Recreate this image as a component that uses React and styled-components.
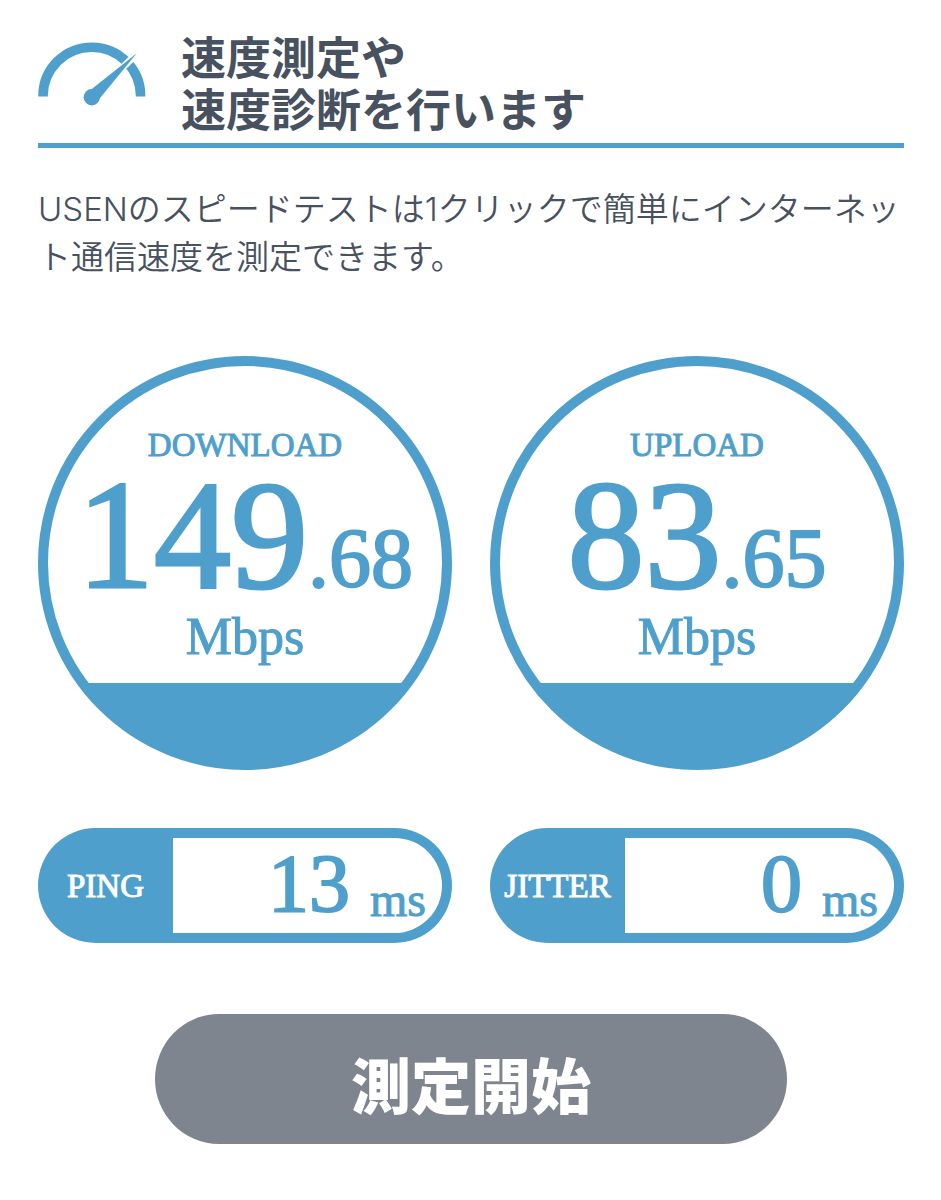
import styled, { createGlobalStyle } from "styled-components"

const GlobalStyle = createGlobalStyle`
  body {
    margin: 0;
    background-color: #fff;
    color: #47515f;
    font-family: "Noto Sans CJK JP", sans-serif;
  }
`

const PageStyled = styled.main`
  padding: 30px 37px 56px 38px;
`

const HeaderStyled = styled.header`
  display: flex;
  align-items: flex-start;
  gap: 35px;
  padding-bottom: 9px;
  border-bottom: 5px solid #4f9fcd;

  svg {
    display: block;
    flex: none;
    margin-top: 12px;
  }

  h1 {
    margin: 0;
    font-size: 45px;
    font-weight: bold;
    line-height: 52px;
  }
`

const LeadStyled = styled.p`
  margin: 37px -4px 0 0;
  font-family: Inter, "Noto Sans CJK JP", sans-serif;
  font-size: 33px;
  font-weight: 350;
  line-height: 48px;
  word-break: break-all;
`

const ResultGrid = styled.section`
  display: grid;
  grid-template-columns: 1fr 1fr;
  gap: 58px 38px;
  margin-top: 75px;
  color: #4f9fcd;
  font-family: "Liberation Serif", serif;
`

const CircleStyled = styled.div`
  box-sizing: border-box;
  display: flex;
  flex-direction: column;
  align-items: center;
  aspect-ratio: 1;
  padding-top: 59px;
  border: 10px solid #4f9fcd;
  border-radius: 50%;
  background: linear-gradient(to top, #4f9fcd 21%, #fff 21%) border-box;
`

const Label = styled.span`
  font-size: 33px;
  line-height: 40px;
  -webkit-text-stroke: 1px;
`

const SpeedValue = styled.div`
  margin: 10px 0 12px;
  font-size: 154px;
  line-height: 120px;
  white-space: nowrap;
  -webkit-text-stroke: 3px;

  small {
    font-size: 84px;
    line-height: 0;
    -webkit-text-stroke: 2px;
  }
`

const SpeedUnit = styled.span`
  font-size: 52px;
  line-height: 60px;
  -webkit-text-stroke: 1px;
`

const PillStyled = styled.div`
  display: grid;
  grid-template-columns: 135px 1fr;
  border-radius: 58px;
  background-color: #4f9fcd;

  ${Label} {
    align-self: center;
    text-align: center;
    color: #fff;
  }
`

const PillValue = styled.div`
  display: flex;
  justify-content: flex-end;
  align-items: flex-end;
  gap: 20px;
  margin: 10px 10px 10px 0;
  padding: 0 16px 3px 0;
  border-radius: 0 48px 48px 0;
  background-color: #fff;
  font-size: 82px;
  line-height: 92px;
  -webkit-text-stroke: 2px;

  small {
    font-size: 48px;
    line-height: 60px;
    -webkit-text-stroke: 1px;
  }
`

const StartButton = styled.button`
  display: block;
  width: 73%;
  height: 130px;
  margin: 71px auto 0;
  padding: 6px 0 0;
  border: none;
  border-radius: 64px / 65px;
  background-color: #7e858e;
  color: #fff;
  font-family: inherit;
  font-size: 60px;
  font-weight: 900;
  cursor: pointer;
`

function MeterIcon() {
  return (
    <svg width="108" height="64" viewBox="0 0 108 64" aria-hidden="true">
      <path
        d="M5 54.5V54a48.8 48.8 0 0 1 97.600 0v.5"
        fill="none"
        stroke="#4f9fcd"
        strokeWidth="9.600"
      />
      <path d="M70 40 102 8.500" stroke="#fff" strokeWidth="6.800" />
      <path d="M50 50 98.800 11.200 60 58.500Z" fill="#4f9fcd" />
      <circle cx="53.800" cy="55.200" r="8.200" fill="#4f9fcd" />
    </svg>
  )
}

function SpeedCircle({ label, value }) {
  const [whole, decimal] = value.split(".")

  return (
    <CircleStyled>
      <Label>{label}</Label>
      <SpeedValue>
        {whole}
        <small>.{decimal}</small>
      </SpeedValue>
      <SpeedUnit>Mbps</SpeedUnit>
    </CircleStyled>
  )
}

function Pill({ label, value }) {
  return (
    <PillStyled>
      <Label>{label}</Label>
      <PillValue>
        {value}
        <small>ms</small>
      </PillValue>
    </PillStyled>
  )
}

function App() {
  return (
    <>
      <GlobalStyle />
      <PageStyled lang="ja">
        <HeaderStyled>
          <MeterIcon />
          <h1>
            速度測定や
            <br />
            速度診断を行います
          </h1>
        </HeaderStyled>
        <LeadStyled>
          USENのスピードテストは1クリックで簡単にインターネット通信速度を測定できます。
        </LeadStyled>
        <ResultGrid>
          <SpeedCircle label="DOWNLOAD" value="149.68" />
          <SpeedCircle label="UPLOAD" value="83.65" />
          <Pill label="PING" value="13" />
          <Pill label="JITTER" value="0" />
        </ResultGrid>
        <StartButton type="button">測定開始</StartButton>
      </PageStyled>
    </>
  )
}

export default App
